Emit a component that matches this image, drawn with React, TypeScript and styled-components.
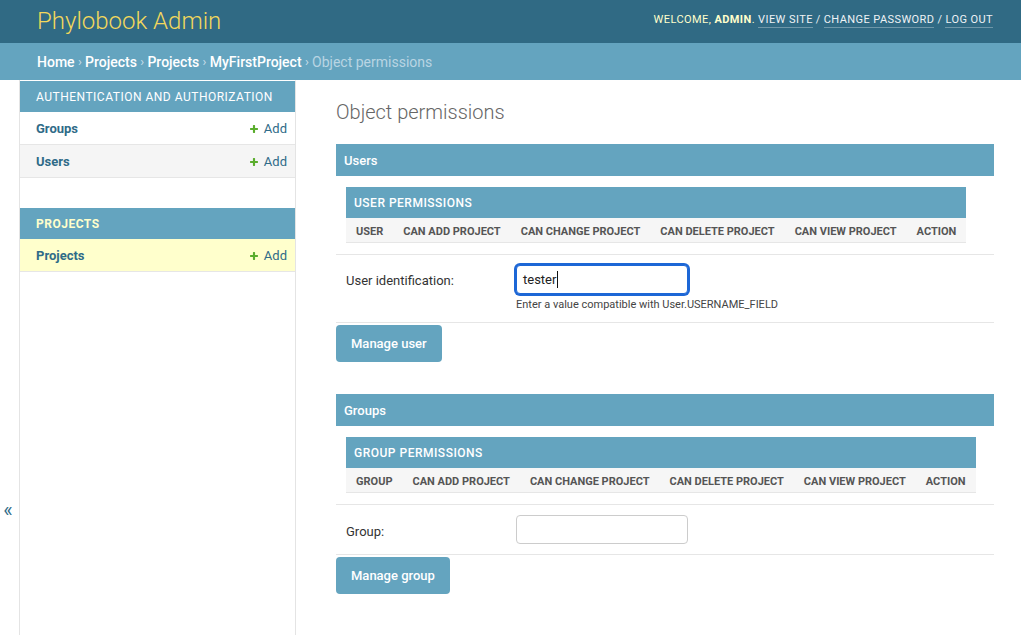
import React from 'react';
import styled, { createGlobalStyle } from 'styled-components';

const C = {
  header: '#306a84',
  accent: '#64a4bf',
  link: '#2f6b88',
  title: '#f3d85c',
  border: '#e6e6e6',
  sideBorder: '#e4e4e4',
};

const GlobalStyle = createGlobalStyle`
  html, body { margin: 0; padding: 0; }
  body {
    font-family: Roboto, "Lucida Grande", "DejaVu Sans", Verdana, Arial, sans-serif;
    font-size: 14px;
    color: #333;
    background: #fff;
  }
  * { box-sizing: border-box; }
`;

const Header = styled.header`
  display: flex;
  align-items: center;
  justify-content: space-between;
  height: 43px;
  padding: 0 28px 0 37px;
  background: ${C.header};
`;

const Branding = styled.h1`
  margin: 0 0 2px;
  font-size: 24px;
  font-weight: 300;
  line-height: 28px;
  color: ${C.title};
`;

const UserTools = styled.div`
  margin-bottom: 4px;
  font-size: 11px;
  letter-spacing: 0.42px;
  text-transform: uppercase;
  color: #ffffcc;
  line-height: 14px;
`;

const Strong = styled.strong`
  font-weight: 700;
`;

const ToolLink = styled.a`
  color: #eef2f5;
  text-decoration: none;
  border-bottom: 1px solid rgba(255, 255, 255, 0.3);
  padding-bottom: 1px;
`;

const Slash = styled.span`
  color: #e6eef2;
  margin: 0 3px;
`;

const Breadcrumbs = styled.nav`
  display: flex;
  align-items: center;
  height: 37px;
  padding: 0 37px;
  background: ${C.accent};
  font-size: 14px;
  color: #b9d5e3;
`;

const Crumb = styled.a`
  color: #fff;
  font-weight: 500;
  text-decoration: none;
`;

const Sep = styled.span`
  color: #c9dfea;
  margin: 0 3.3px;
  font-size: 13px;
`;

const Main = styled.div`
  display: flex;
  min-height: calc(100vh - 80px);
`;

const Toggle = styled.button`
  flex: 0 0 20px;
  width: 20px;
  display: flex;
  justify-content: center;
  align-items: flex-start;
  padding: 420px 3px 0 0;
  border: 0;
  border-right: 1px solid ${C.sideBorder};
  background: #fff;
  color: ${C.link};
  font-family: inherit;
  font-size: 20px;
  line-height: 20px;
  cursor: pointer;
`;

const NavSidebar = styled.nav`
  flex: 0 0 276px;
  border-top: 1px solid transparent;
  border-right: 1px solid ${C.sideBorder};
  background: #fff;
`;

const AppModule = styled.table`
  width: 100%;
  border-collapse: collapse;
  margin-bottom: 30px;
`;

const AppCaption = styled.caption<{ $current?: boolean }>`
  text-align: left;
  padding: 9px 16px 7px;
  background: ${C.accent};
  color: ${(p) => (p.$current ? '#ffffcc' : '#fff')};
  font-size: 12px;
  font-weight: ${(p) => (p.$current ? 700 : 400)};
  letter-spacing: 0.5px;
  line-height: 15px;
  text-transform: uppercase;
`;

const ModelRow = styled.tr<{ $tone: 'plain' | 'alt' | 'current' }>`
  background: ${(p) => (p.$tone === 'current' ? '#ffffcc' : p.$tone === 'alt' ? '#f5f5f5' : '#fff')};
`;

const ModelName = styled.th`
  text-align: left;
  padding: 9px 8px 7px 16px;
  font-size: 13px;
  line-height: 16px;
  border-bottom: 1px solid ${C.border};
`;

const ModelLink = styled.a`
  color: ${C.link};
  font-weight: 700;
  text-decoration: none;
`;

const ModelAction = styled.td`
  text-align: right;
  padding: 9px 8px 7px;
  font-size: 13px;
  line-height: 16px;
  border-bottom: 1px solid ${C.border};
  white-space: nowrap;
`;

const AddLink = styled.a`
  display: inline-flex;
  align-items: center;
  vertical-align: top;
  height: 16px;
  gap: 5px;
  color: ${C.link};
  text-decoration: none;
`;

const Content = styled.main`
  flex: 1;
  min-width: 0;
  padding: 20px 27px 20px 40px;
`;

const Title = styled.h1`
  margin: 0 0 20px;
  font-size: 20px;
  font-weight: 300;
  line-height: 24px;
  color: #666;
`;

const Section = styled.section<{ $gap?: number }>`
  margin-top: ${(p) => p.$gap ?? 0}px;
`;

const SectionTitle = styled.h2`
  margin: 0;
  padding: 9px 8px 7px;
  background: ${C.accent};
  color: #fff;
  font-size: 13px;
  font-weight: 500;
  line-height: 16px;
`;

const FormRow = styled.div<{ $tight?: boolean }>`
  padding: ${(p) => (p.$tight ? '11px 10px' : '10px')};
  border-bottom: 1px solid ${C.border};
`;

const PermTable = styled.table`
  border-collapse: collapse;
`;

const PermCaption = styled.caption`
  text-align: left;
  padding: 9px 8px 7px;
  background: ${C.accent};
  color: #fff;
  font-size: 12px;
  font-weight: 500;
  letter-spacing: 0.5px;
  line-height: 15px;
  text-transform: uppercase;
`;

const PermTh = styled.th`
  padding: 7px 10px 3px;
  background: #f6f6f6;
  border-bottom: 1px solid ${C.border};
  color: #555;
  font-size: 11px;
  font-weight: 700;
  line-height: 14px;
  text-align: left;
  text-transform: uppercase;
  white-space: nowrap;
`;

const FieldLine = styled.div`
  display: flex;
  align-items: center;
`;

const Label = styled.label<{ $drop?: number }>`
  flex: 0 0 160px;
  margin-right: 10px;
  padding-top: ${(p) => p.$drop ?? 2}px;
  font-size: 13px;
  color: #333;
`;

const TextInput = styled.input`
  width: 172px;
  height: 29px;
  padding: 5px 6px;
  border: 1px solid #ccc;
  border-radius: 4px;
  font-family: inherit;
  font-size: 13px;
  color: #333;
  background: #fff;
`;

const FocusedInput = styled.div`
  display: flex;
  align-items: center;
  width: 172px;
  height: 29px;
  padding: 0 6px;
  border: 1px solid #1d67d6;
  border-radius: 4px;
  box-shadow: 0 0 0 2px #1d67d6;
  font-size: 13px;
  color: #222;
  background: #fff;
`;

const Caret = styled.span`
  display: inline-block;
  width: 1px;
  height: 17px;
  margin-left: 1px;
  background: #111;
`;

const Help = styled.div`
  margin-left: 170px;
  padding-top: 4px;
  font-size: 11px;
  line-height: 14px;
  color: #444;
`;

const Button = styled.button`
  margin-top: 2px;
  padding: 10px 15px;
  border: 0;
  border-radius: 4px;
  background: ${C.accent};
  color: #fff;
  font-family: inherit;
  font-size: 13px;
  font-weight: 500;
  line-height: 17px;
  cursor: pointer;
`;

const PlusIcon = () => (
  <svg width="10" height="10" viewBox="0 0 1792 1792" aria-hidden="true">
    <path
      fill="#5aad2d"
      d="M1600 796v192q0 40-28 68t-68 28h-416v416q0 40-28 68t-68 28h-192q-40 0-68-28t-28-68v-416h-416q-40 0-68-28t-28-68v-192q0-40 28-68t68-28h416v-416q0-40 28-68t68-28h192q40 0 68 28t28 68v416h416q40 0 68 28t28 68z"
    />
  </svg>
);

type Model = { name: string; tone: 'plain' | 'alt' | 'current' };
type App = { name: string; current?: boolean; models: Model[] };

const apps: App[] = [
  {
    name: 'Authentication and Authorization',
    models: [
      { name: 'Groups', tone: 'plain' },
      { name: 'Users', tone: 'alt' },
    ],
  },
  { name: 'Projects', current: true, models: [{ name: 'Projects', tone: 'current' }] },
];

const PermissionTable = ({ caption, first }: { caption: string; first: string }) => (
  <PermTable>
    <PermCaption>{caption}</PermCaption>
    <thead>
      <tr>
        {[first, 'Can add project', 'Can change project', 'Can delete project', 'Can view project', 'Action'].map((h) => (
          <PermTh key={h}>{h}</PermTh>
        ))}
      </tr>
    </thead>
  </PermTable>
);

export default function App() {
  return (
    <>
      <GlobalStyle />
      <Header>
        <Branding>Phylobook Admin</Branding>
        <UserTools>
          Welcome, <Strong>admin</Strong>. <ToolLink href="#">View site</ToolLink>
          <Slash>/</Slash>
          <ToolLink href="#">Change password</ToolLink>
          <Slash>/</Slash>
          <ToolLink href="#">Log out</ToolLink>
        </UserTools>
      </Header>
      <Breadcrumbs>
        <Crumb href="#">Home</Crumb>
        <Sep>›</Sep>
        <Crumb href="#">Projects</Crumb>
        <Sep>›</Sep>
        <Crumb href="#">Projects</Crumb>
        <Sep>›</Sep>
        <Crumb href="#">MyFirstProject</Crumb>
        <Sep>›</Sep>
        <span>Object permissions</span>
      </Breadcrumbs>
      <Main>
        <Toggle aria-label="Toggle navigation">«</Toggle>
        <NavSidebar>
          {apps.map((app) => (
            <AppModule key={app.name}>
              <AppCaption $current={app.current}>{app.name}</AppCaption>
              <tbody>
                {app.models.map((m) => (
                  <ModelRow key={m.name} $tone={m.tone}>
                    <ModelName scope="row">
                      <ModelLink href="#">{m.name}</ModelLink>
                    </ModelName>
                    <ModelAction>
                      <AddLink href="#">
                        <PlusIcon />
                        Add
                      </AddLink>
                    </ModelAction>
                  </ModelRow>
                ))}
              </tbody>
            </AppModule>
          ))}
        </NavSidebar>
        <Content>
          <Title>Object permissions</Title>
          <Section>
            <SectionTitle>Users</SectionTitle>
            <FormRow $tight>
              <PermissionTable caption="User permissions" first="User" />
            </FormRow>
            <FormRow>
              <FieldLine>
                <Label>User identification:</Label>
                <FocusedInput>
                  tester
                  <Caret />
                </FocusedInput>
              </FieldLine>
              <Help>Enter a value compatible with User.USERNAME_FIELD</Help>
            </FormRow>
            <Button>Manage user</Button>
          </Section>
          <Section $gap={32}>
            <SectionTitle>Groups</SectionTitle>
            <FormRow $tight>
              <PermissionTable caption="Group permissions" first="Group" />
            </FormRow>
            <FormRow>
              <FieldLine>
                <Label $drop={4}>Group:</Label>
                <TextInput type="text" />
              </FieldLine>
            </FormRow>
            <Button>Manage group</Button>
          </Section>
        </Content>
      </Main>
    </>
  );
}
